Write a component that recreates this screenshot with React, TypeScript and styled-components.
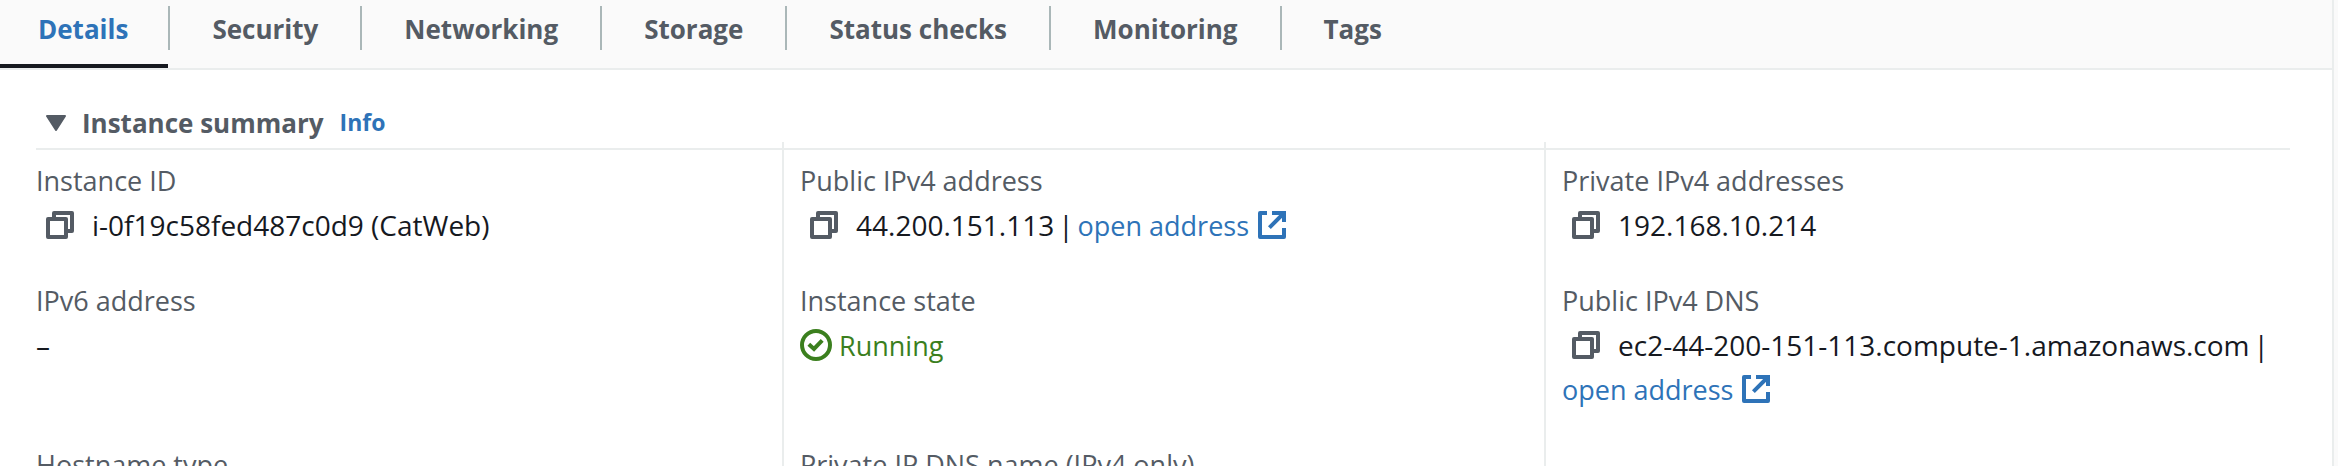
import React from 'react';
import styled, { createGlobalStyle, css } from 'styled-components';

const color = {
  text: '#16191f',
  muted: '#545b64',
  link: '#2e73b8',
  success: '#3b7f1e',
  line: '#eaeded',
  tabLine: '#aab7b8',
  tabBar: '#fafafa',
};

const GlobalStyle = createGlobalStyle`
  * { box-sizing: border-box; }
  html, body { height: 100%; }
  body {
    margin: 0;
    overflow: hidden;
    background: #fafafa;
    color: ${color.text};
    font: 400 27px/44px "Open Sans", "Noto Sans", sans-serif;
  }
  #root { height: 100%; }
`;

const Panel = styled.main`
  min-height: 100%;
  margin-right: 4px;
  border-right: 2px solid ${color.line};
  background: #fff;
`;

const TabBar = styled.div`
  display: flex;
  align-items: flex-start;
  height: 70px;
  background: ${color.tabBar};
  border-bottom: 2px solid ${color.line};
`;

const TabItem = styled.div`
  display: flex;
  &:not(:first-child)::before {
    content: '';
    width: 2px;
    height: 44px;
    margin-top: 6px;
    background: ${color.tabLine};
  }
  &:first-child > button { padding-left: 38px; padding-right: 40px; }
`;

const Tab = styled.button<{ $active: boolean }>`
  height: 68px;
  padding: 0 42px 6px;
  border: 0;
  border-bottom: 4px solid ${p => (p.$active ? color.text : 'transparent')};
  background: none;
  color: ${p => (p.$active ? color.link : color.muted)};
  font: 700 26px/36px "Open Sans", "Noto Sans", sans-serif;
  cursor: pointer;
`;

const Section = styled.section`
  padding: 30px 42px 0 36px;
`;

const SectionHeader = styled.header`
  display: flex;
  align-items: baseline;
  gap: 16px;
  height: 50px;
  border-bottom: 2px solid ${color.line};
`;

const SectionTitle = styled.h2`
  margin: 0;
  font: inherit;
`;

const ToggleButton = styled.button`
  display: flex;
  align-items: center;
  gap: 16px;
  padding: 0 0 0 10px;
  border: 0;
  background: none;
  color: ${color.muted};
  font: 700 26px/44px "Open Sans", "Noto Sans", sans-serif;
  cursor: pointer;
`;

const linkStyle = css`
  color: ${color.link};
  text-decoration: none;
`;

const InfoLink = styled.a`
  ${linkStyle}
  font-size: 23px;
  font-weight: 700;
`;

const Columns = styled.div`
  display: grid;
  grid-template-columns: repeat(3, 1fr);
  margin: -8px -16px 0;
`;

const Column = styled.dl`
  display: grid;
  grid-template-rows: 88px 132px 44px;
  row-gap: 32px;
  margin: 0;
  padding: 17px 16px 0;
  & + & { border-left: 2px solid ${color.line}; }
`;

const Label = styled.dt`
  color: ${color.muted};
`;

const Value = styled.dd`
  margin: 0;
  font-size: 28px;
  font-weight: 500;
`;

const Separator = styled.span`
  display: inline-block;
  margin: 0 4px;
`;

const CopyButton = styled.button`
  display: inline-flex;
  margin: 0 16px 0 8px;
  padding: 0;
  border: 0;
  background: none;
  color: ${color.muted};
  vertical-align: -5px;
  cursor: pointer;
`;

const ExternalLink = styled.a`
  ${linkStyle}
  display: inline-block;
  font-size: 27px;
`;

const Status = styled.span`
  color: ${color.success};
  font-size: 27px;
`;

const Icon = styled.svg`
  width: 32px;
  height: 32px;
  fill: none;
  stroke: currentColor;
  stroke-width: 2;
  vertical-align: -5px;
`;

const Caret = styled.svg`
  width: 20px;
  height: 16px;
  fill: currentColor;
  stroke: currentColor;
  stroke-width: 2;
  stroke-linejoin: round;
`;

const Copy = ({ what }: { what: string }) => (
  <CopyButton type="button" aria-label={`Copy ${what}`}>
    <Icon viewBox="0 0 16 16" strokeLinejoin="round" aria-hidden="true">
      <path d="M2 5h9v9H2z" />
      <path d="M5 5V2h9v9h-3" />
    </Icon>
  </CopyButton>
);

const OpenAddress = () => (
  <>
    <Separator>|</Separator>
    <ExternalLink href="#open">
      open address{' '}
      <Icon viewBox="0 0 16 16" aria-hidden="true">
        <path d="M5.500 2H2v12h12V9.500" strokeLinejoin="round" />
        <path d="M8 2h6v4.500M14 2L6.700 9.300" />
      </Icon>
    </ExternalLink>
  </>
);

const Field = ({ label, children }: { label: string; children?: React.ReactNode }) => (
  <div>
    <Label>{label}</Label>
    {children && <Value>{children}</Value>}
  </div>
);

const tabs = ['Details', 'Security', 'Networking', 'Storage', 'Status checks', 'Monitoring', 'Tags'];

export default function App() {
  return (
    <>
      <GlobalStyle />
      <Panel>
        <TabBar role="tablist">
          {tabs.map((name, i) => (
            <TabItem key={name} role="presentation">
              <Tab type="button" role="tab" aria-selected={i === 0} $active={i === 0}>
                {name}
              </Tab>
            </TabItem>
          ))}
        </TabBar>
        <Section>
          <SectionHeader>
            <SectionTitle>
              <ToggleButton type="button" aria-expanded="true">
                <Caret viewBox="0 0 20 16" aria-hidden="true">
                  <path d="M1 1h18l-9 14z" />
                </Caret>
                Instance summary
              </ToggleButton>
            </SectionTitle>
            <InfoLink href="#info">Info</InfoLink>
          </SectionHeader>
          <Columns>
            <Column>
              <Field label="Instance ID">
                <Copy what="instance ID" />
                i-0f19c58fed487c0d9 (CatWeb)
              </Field>
              <Field label="IPv6 address">–</Field>
              <Field label="Hostname type" />
            </Column>
            <Column>
              <Field label="Public IPv4 address">
                <Copy what="public IPv4 address" />
                44.200.151.113
                <OpenAddress />
              </Field>
              <Field label="Instance state">
                <Status>
                  <Icon viewBox="0 0 16 16" aria-hidden="true">
                    <circle cx="8" cy="8" r="7" />
                    <path d="M4.400 7.600L7 10l4.100-4.300" />
                  </Icon>{' '}
                  Running
                </Status>
              </Field>
              <Field label="Private IP DNS name (IPv4 only)" />
            </Column>
            <Column>
              <Field label="Private IPv4 addresses">
                <Copy what="private IPv4 address" />
                192.168.10.214
              </Field>
              <Field label="Public IPv4 DNS">
                <Copy what="public IPv4 DNS" />
                ec2-44-200-151-113.compute-1.amazonaws.com
                <OpenAddress />
              </Field>
            </Column>
          </Columns>
        </Section>
      </Panel>
    </>
  );
}
